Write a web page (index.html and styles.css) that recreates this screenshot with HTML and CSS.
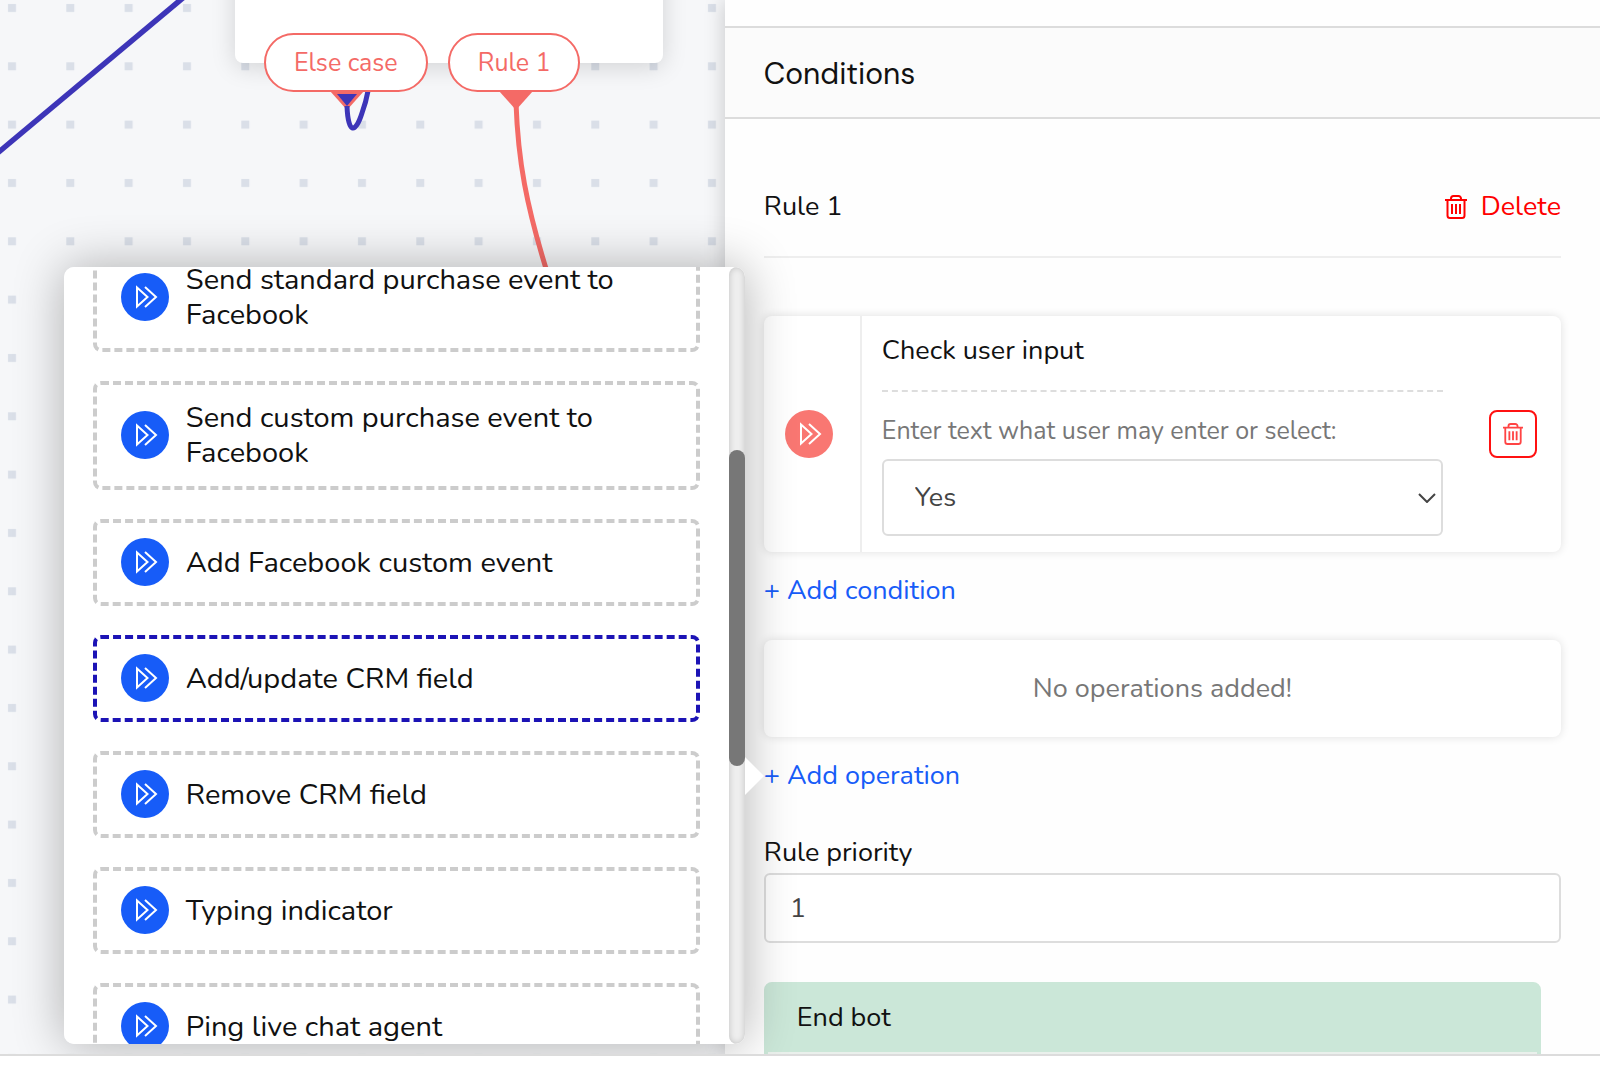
FILE: index.html
```html
<!DOCTYPE html>
<html lang="en">
<head>
  <meta charset="UTF-8">
  <meta name="viewport" content="width=device-width, initial-scale=1">
  <title>Bot builder</title>
  <link rel="stylesheet" href="styles.css">
</head>
<body>
  <svg class="sprite" width="0" height="0" aria-hidden="true">
    <symbol id="icon-forward" viewBox="0 0 48 48">
      <path d="M16 14.500v19L26.500 24zM24 14 35 24 24 34" fill="none" stroke="#fff" stroke-width="2"/>
    </symbol>
    <symbol id="icon-trash" viewBox="0 0 22 24">
      <path d="M0 5h22M6 5V3.500A2.500 2.500 0 0 1 8.500 1h5A2.500 2.500 0 0 1 16 3.500V5M2.500 5V20.500a2.500 2.500 0 0 0 2.500 2.500h12a2.500 2.500 0 0 0 2.500-2.500V5M7 9v10M11 9v10M15 9v10" fill="none" stroke="currentColor" stroke-width="2"/>
    </symbol>
  </svg>

  <div class="app">
    <main class="workspace">
      <section class="canvas">
        <svg class="canvas-grid" aria-hidden="true">
          <defs>
            <pattern id="dots" width="58.33" height="58.33" patternUnits="userSpaceOnUse">
              <rect x="8" y="4" width="8" height="8" fill="#dadfe8"/>
            </pattern>
          </defs>
          <rect width="100%" height="100%" fill="url(#dots)"/>
          <path d="M-6 156 190-8" stroke="#3d35b8" stroke-width="5.500"/>
        </svg>
        <div class="node"></div>
        <svg class="canvas-links" aria-hidden="true">
          <path d="M330 91h34l-17 19z" fill="#f46a66"/>
          <path d="M337 94h20l-10 12z" fill="#3d35b8"/>
          <path d="M347 106C348 133 355 135 362 113Q366 102 368 91" fill="none" stroke="#3d35b8" stroke-width="5"/>
          <path d="M499 91h34l-17 19z" fill="#f46a66"/>
          <path d="M516 103C518 160 526 205 548 275" fill="none" stroke="#f46a66" stroke-width="5"/>
        </svg>
        <div class="ports">
          <button class="port">Else case</button>
          <button class="port">Rule 1</button>
        </div>
      </section>

      <aside class="panel">
        <h2 class="panel-title">Conditions</h2>
        <div class="panel-body">
          <div class="rule-head">
            <span>Rule 1</span>
            <button class="delete-rule"><svg class="trash"><use href="#icon-trash"/></svg>Delete</button>
          </div>

          <div class="condition">
            <div class="condition-icon"><svg class="badge badge-red"><use href="#icon-forward"/></svg></div>
            <div class="condition-form">
              <div class="condition-name">Check user input</div>
              <label class="hint" for="user-text">Enter text what user may enter or select:</label>
              <div class="select-box">
                <select id="user-text">
                  <option>Yes</option>
                </select>
                <svg class="chevron" viewBox="0 0 18 10" aria-hidden="true"><path d="M1 1l8 8 8-8" fill="none" stroke="#444" stroke-width="2"/></svg>
              </div>
            </div>
            <div class="condition-actions">
              <button class="delete-condition" aria-label="Delete condition"><svg class="trash trash-small"><use href="#icon-trash"/></svg></button>
            </div>
          </div>
          <a class="add-link" href="#">+ Add condition</a>

          <div class="empty">No operations added!</div>
          <a class="add-link" href="#">+ Add operation</a>

          <label class="field-label" for="priority">Rule priority</label>
          <input class="field" id="priority" type="text" value="1">

          <div class="end-bot">
            <div class="end-bot-head">End bot</div>
            <div class="end-bot-body"></div>
          </div>
        </div>

        <div class="popover">
          <div class="popover-view">
            <div class="operations">
              <button class="operation"><svg class="badge"><use href="#icon-forward"/></svg>Send standard purchase event to Facebook</button>
              <button class="operation"><svg class="badge"><use href="#icon-forward"/></svg>Send custom purchase event to Facebook</button>
              <button class="operation"><svg class="badge"><use href="#icon-forward"/></svg>Add Facebook custom event</button>
              <button class="operation operation-active"><svg class="badge"><use href="#icon-forward"/></svg>Add/update CRM field</button>
              <button class="operation"><svg class="badge"><use href="#icon-forward"/></svg>Remove CRM field</button>
              <button class="operation"><svg class="badge"><use href="#icon-forward"/></svg>Typing indicator</button>
              <button class="operation"><svg class="badge"><use href="#icon-forward"/></svg>Ping live chat agent</button>
            </div>
            <div class="scrollbar"><div class="scrollbar-thumb"></div></div>
          </div>
        </div>
      </aside>
    </main>
    <footer class="footer"></footer>
  </div>
</body>
</html>
```
FILE: styles.css
```css
* {
  box-sizing: border-box;
}

body {
  margin: 0;
  font-family: Nunito, Lato, sans-serif;
  font-size: 27px;
  line-height: 36px;
  color: #111;
  background: #fff;
}

button, input, select {
  font: inherit;
  color: inherit;
}

button {
  padding: 0;
  background: none;
  border: none;
  cursor: pointer;
}

a {
  text-decoration: none;
}

.sprite {
  position: absolute;
}

.app {
  display: flex;
  flex-direction: column;
  height: 100vh;
}

.workspace {
  flex: 1;
  min-height: 0;
  display: flex;
  overflow: hidden;
}

.footer {
  height: 21px;
  position: relative;
  background: #fff;
  border-top: 2px solid #dcdcdc;
}

/* flow canvas */

.canvas {
  flex: 1;
  position: relative;
  background: #f6f7f9;
}

.canvas-grid, .canvas-links {
  position: absolute;
  top: 0;
  left: 0;
  width: 100%;
  height: 100%;
}

.node {
  position: absolute;
  top: -60px;
  left: 235px;
  width: 428px;
  height: 123px;
  background: #fff;
  border-radius: 8px;
  box-shadow: 0 4px 24px rgba(0, 0, 0, 0.15);
}

.ports {
  position: absolute;
  top: 33px;
  left: 264px;
  display: flex;
  gap: 20px;
}

.port {
  height: 59px;
  padding: 0 28px;
  font-size: 25px;
  color: #f46a66;
  background: #fff;
  border: 2px solid #f46a66;
  border-radius: 30px;
}

/* right side panel */

.panel {
  width: 54.7%;
  position: relative;
  padding-top: 26px;
  background: #fefefe;
  box-shadow: 0 0 20px rgba(0, 0, 0, 0.2);
}

.panel-title {
  margin: 0;
  padding: 2px 39px 0;
  font-family: "DM Sans", Poppins, sans-serif;
  font-size: 30px;
  font-weight: 400;
  line-height: 87px;
  background: #fbfbfb;
  border-top: 2px solid #dcdcdc;
  border-bottom: 2px solid #dcdcdc;
}

.panel-body {
  display: flex;
  flex-direction: column;
  padding: 70px 39px 0;
}

.rule-head {
  display: flex;
  justify-content: space-between;
  padding-bottom: 31px;
  border-bottom: 2px solid #eee;
}

.delete-rule {
  display: flex;
  align-items: center;
  gap: 14px;
  color: #f00;
}

.trash {
  width: 22px;
  height: 24px;
}

.trash-small {
  width: 20px;
  height: 22px;
}

.condition {
  display: flex;
  margin-top: 58px;
  background: #fff;
  border-radius: 8px;
  box-shadow: 0 0 10px rgba(0, 0, 0, 0.12);
}

.condition-icon {
  display: flex;
  align-items: center;
  padding: 0 27px 0 21px;
  border-right: 2px solid #eee;
}

.badge {
  flex: none;
  width: 48px;
  height: 48px;
  background: #175cf8;
  border-radius: 50%;
}

.badge-red {
  background: #f97772;
}

.condition-form {
  flex: 1;
  display: flex;
  flex-direction: column;
  padding: 17px 0 16px 20px;
}

.condition-name {
  padding-bottom: 21px;
  border-bottom: 2px dashed #ddd;
}

.hint {
  margin: 21px 0 10px;
  font-size: 25px;
  color: #777;
}

.select-box {
  position: relative;
  display: flex;
}

.select-box select {
  width: 100%;
  height: 77px;
  padding: 0 31px;
  color: #444;
  appearance: none;
  background: #fff;
  border: 2px solid #ddd;
  border-radius: 6px;
}

.chevron {
  position: absolute;
  right: 7px;
  top: 34px;
  width: 18px;
  height: 10px;
}

.condition-actions {
  display: flex;
  align-items: center;
  padding: 0 24px 0 46px;
}

.delete-condition {
  display: flex;
  align-items: center;
  justify-content: center;
  width: 48px;
  height: 48px;
  color: #f44;
  border: 2px solid #f11;
  border-radius: 8px;
}

.add-link {
  align-self: flex-start;
  margin-top: 21px;
  color: #175cf8;
}

.empty {
  margin-top: 31px;
  line-height: 97px;
  text-align: center;
  color: #777;
  background: #fff;
  border-radius: 8px;
  box-shadow: 0 0 10px rgba(0, 0, 0, 0.12);
}

.field-label {
  margin-top: 41px;
}

.field {
  height: 70px;
  margin-top: 2px;
  padding: 0 24px;
  color: #444;
  background: #fff;
  border: 2px solid #ddd;
  border-radius: 6px;
}

.end-bot {
  margin: 39px 20px 0 0;
  border: 4px solid #cbe7d8;
  border-radius: 8px;
}

.end-bot-head {
  padding: 14px 29px 16px;
  background: #cbe7d8;
}

.end-bot-body {
  height: 60px;
  background: #eaf0ec;
}

/* list of operations, opened from the "Add operation" link */

.popover {
  position: absolute;
  top: 267px;
  right: calc(100% - 20px);
  width: 681px;
  border-radius: 10px;
  box-shadow: 0 0 50px rgba(0, 0, 0, 0.3);
}

.popover::after {
  content: "";
  position: absolute;
  top: 490px;
  left: 100%;
  border: 19px solid transparent;
  border-left-color: #fff;
  border-right: none;
}

.popover-view {
  display: flex;
  height: 777px;
  overflow: hidden;
  background: #fff;
  border-radius: 10px;
}

.operations {
  flex: 1;
  display: flex;
  flex-direction: column;
  gap: 29px;
  margin-top: -24px;
  padding: 0 29px;
}

.operation {
  flex: none;
  display: flex;
  align-items: center;
  gap: 17px;
  padding: 15px 24px 16px;
  font-size: 29px;
  line-height: 35px;
  text-align: left;
  border: 4px dashed #ccc;
  border-radius: 8px;
}

.operation-active {
  border-color: #1c13b5;
}

.scrollbar {
  width: 16px;
  padding-top: 183px;
  background: #eee;
  border-radius: 8px;
  box-shadow: inset 0 0 6px rgba(0, 0, 0, 0.2);
}

.scrollbar-thumb {
  height: 316px;
  background: #777;
  border-radius: 8px;
}
```
